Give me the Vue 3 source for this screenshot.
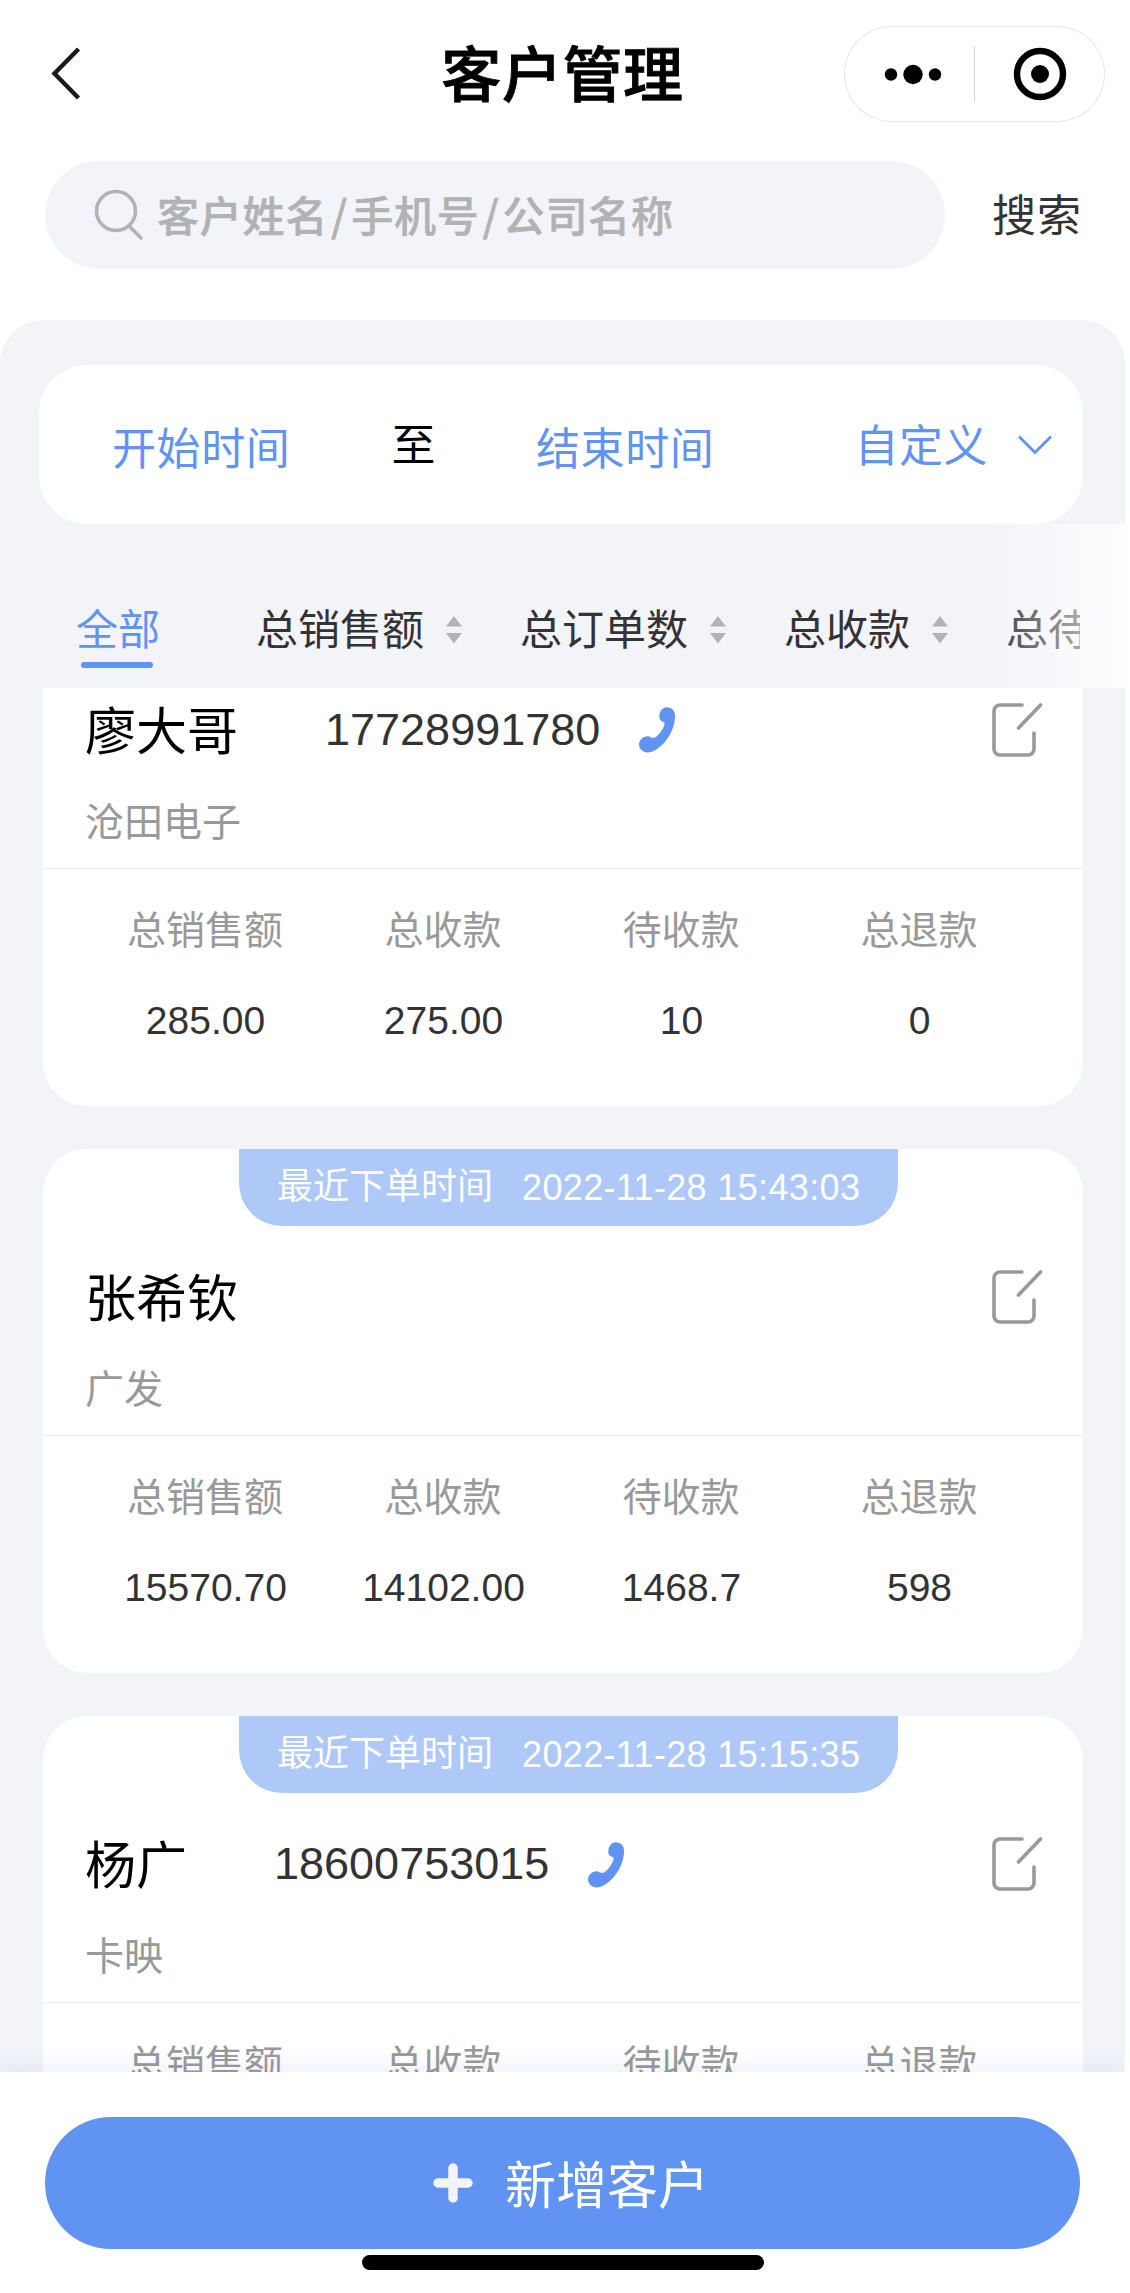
<script setup>
const tabs = [
  { label: '总销售额', sort: true },
  { label: '总订单数', sort: true },
  { label: '总收款', sort: true },
  { label: '总待', sort: false },
]
const labels = ['总销售额', '总收款', '待收款', '总退款']
const customers = [
  { time: '', name: '廖大哥', phone: '17728991780', company: '沧田电子', values: ['285.00', '275.00', '10', '0'] },
  { time: '2022-11-28 15:43:03', name: '张希钦', phone: '', company: '广发', values: ['15570.70', '14102.00', '1468.7', '598'] },
  { time: '2022-11-28 15:15:35', name: '杨广', phone: '18600753015', company: '卡映', values: [] },
]
</script>

<template>
  <div class="page">
    <header class="nav">
      <svg class="back" width="32" height="56" viewBox="0 0 32 56"><path d="M28.500 3 4.500 27.500l24 24.500" fill="none" stroke="#1a1a1a" stroke-width="4.4" /></svg>
      <h1>客户管理</h1>
      <div class="capsule">
        <svg width="261" height="96" viewBox="0 0 261 96">
          <circle cx="47" cy="48.500" r="6.200" /><circle cx="69" cy="48.500" r="9.700" /><circle cx="91" cy="48.500" r="6.200" />
          <path d="M130.500 20v56" stroke="#d5d5d5" stroke-width="1" />
          <circle cx="196" cy="48" r="23" fill="none" stroke="#000" stroke-width="6.400" /><circle cx="196" cy="48" r="9" />
        </svg>
      </div>
    </header>

    <div class="search-row">
      <div class="search">
        <svg width="52" height="52" viewBox="0 0 52 52" fill="none" stroke="#b2b2b2" stroke-width="3.6" stroke-linecap="round"><circle cx="22" cy="22" r="19.500" /><path d="m35 37 12 12" /></svg>
        <span class="placeholder">客户姓名<i>/</i>手机号<i>/</i>公司名称</span>
      </div>
      <span class="search-btn">搜索</span>
    </div>

    <main class="panel">
      <div class="filter">
        <span class="date start">开始时间</span>
        <span class="to">至</span>
        <span class="date end">结束时间</span>
        <span class="custom">自定义</span>
        <svg width="38" height="22" viewBox="0 0 38 22"><path d="m3 2.500 16 16 16-16" fill="none" stroke="#6093f2" stroke-width="2.800" /></svg>
      </div>

      <div class="tabs">
        <div class="tab-scroll">
          <span class="tab active">全部</span>
          <span v-for="t in tabs" :key="t.label" class="tab">{{ t.label }}
            <svg v-if="t.sort" width="16" height="28" viewBox="0 0 16 28" fill="#b3b3b3"><path d="M8 0l8 10.500H0zM8 27.500l8-10.500H0z" /></svg>
          </span>
        </div>
        <div class="fade"></div>
      </div>

      <div class="list">
        <section v-for="c in customers" :key="c.name" class="card" :class="{ scrolled: !c.time }">
          <div v-if="c.time" class="badge"><span>最近下单时间</span><span class="time">{{ c.time }}</span></div>
          <div class="head">
            <span class="name">{{ c.name }}</span>
            <template v-if="c.phone">
              <span class="phone">{{ c.phone }}</span>
              <svg width="36" height="46" viewBox="0 0 36 46"><path fill="#6093f2" d="M27.700.2C32.500.3 36 3.500 36 8.500c0 4.500-.8 9-2.500 13.500C31 28.500 27 34.500 21.500 39.300 17.500 43 12.500 45.600 8.500 45.500 3.800 45.300 0 41.500 0 37.500c0-4.500 4-8.300 8.700-8.300 2.600 0 3.800 1.800 5.600 1.800 2 0 5.500-3.300 7.700-6.500 2-3 3.600-6.300 3.700-8.800-1.500-1.300-5.400-1.500-5.400-6C20.300 4.500 23.500.1 27.700.2z" /></svg>
            </template>
            <svg class="edit" width="52" height="56" viewBox="0 0 52 56" fill="none" stroke="#999" stroke-width="3.600" stroke-linecap="round" stroke-linejoin="round"><path d="M31 3H9a6 6 0 0 0-6 6v38a6 6 0 0 0 6 6h28a6 6 0 0 0 6-6V31M49.500 3 27.500 26" /></svg>
          </div>
          <div class="company">{{ c.company }}</div>
          <div class="stats">
            <div v-for="(l, i) in labels" :key="l" class="stat">
              <span class="label">{{ l }}</span>
              <span v-if="c.values.length" class="value">{{ c.values[i] }}</span>
            </div>
          </div>
        </section>
      </div>
    </main>

    <footer class="footer">
      <button class="add">
        <svg width="40" height="40" viewBox="0 0 40 40"><path d="M20 5v30M5 20h30" stroke="#f2f4f9" stroke-width="9.500" stroke-linecap="round" /></svg>
        <span>新增客户</span>
      </button>
      <div class="home"></div>
    </footer>
  </div>
</template>

<style>
html, body { margin: 0; background: #fff; }
</style>

<style scoped>
* { box-sizing: border-box; }
.page {
  width: 1125px; height: 2293px; overflow: hidden; background: #fff;
  display: flex; flex-direction: column;
  font-family: "Liberation Sans", "Noto Sans CJK SC", sans-serif; color: #333;
}
svg { display: block; flex: none; }
span { white-space: nowrap; }
.nav { height: 161px; flex: none; display: grid; grid-template-columns: 282px 561px 282px; align-items: start; }
.back { margin: 46px 0 0 50px; }
h1 { margin: 27px 0 0; text-align: center; font-family: "Noto Sans CJK SC", sans-serif; font-size: 60px; letter-spacing: .6px; line-height: 88px; font-weight: 500; -webkit-text-stroke: .9px #000; color: #000; }
.capsule { width: 261px; height: 96px; margin: 26px 0 0 1px; border-radius: 48px; box-shadow: inset 0 0 0 1px #e6e6e6; }
.search-row { height: 159px; flex: none; display: flex; align-items: flex-start; padding-left: 45px; }
.search { width: 900px; height: 108px; border-radius: 54px; background: #f2f4f9; display: flex; align-items: center; padding-left: 49px; }
.placeholder { margin: -4px 0 0 11px; font-family: "Noto Sans CJK SC", sans-serif; font-size: 42px; letter-spacing: .8px; font-weight: 500; -webkit-text-stroke: .5px #b2b2b2; color: #b2b2b2; }
.placeholder i { display: inline-block; width: 23px; text-align: center; font-style: normal; }
.search-btn { margin: 2px 0 0 47px; font-size: 44px; letter-spacing: 1px; line-height: 108px; }
.panel { flex: 1; min-height: 0; background: #f2f4f8; border-radius: 44px 44px 0 0; padding-top: 45px; display: flex; flex-direction: column; }
.filter { height: 159px; flex: none; width: 1044px; margin-left: 39px; background: #fff; border-radius: 48px; display: flex; align-items: center; font-size: 44px; letter-spacing: .6px; color: #6093f2; }
.date { margin-left: 73px; padding-top: 3px; }
.to { margin: -5px 0 0 101px; color: #000; }
.end { margin-left: 100px; }
.custom { margin: -4px 0 0 140px; }
.filter svg { margin-left: 28px; }
.tabs { height: 164px; flex: none; position: relative; padding: 0 45px 0 76px; }
.tab-scroll { height: 164px; overflow: hidden; display: flex; }
.tab { flex: none; height: 146px; padding-top: 68px; margin-right: 58px; font-size: 42px; line-height: 62px; display: flex; align-items: center; }
.tab svg { margin: -2px 0 0 22px; }
.active { color: #6093f2; margin-right: 96px; position: relative; }
.active::after { content: ""; position: absolute; left: 5px; bottom: 2px; width: 72px; height: 6px; border-radius: 3px; background: #6093f2; }
.fade { position: absolute; top: 0; right: 0; width: 140px; height: 164px; background: linear-gradient(90deg, rgba(255, 255, 255, 0), rgba(255, 255, 255, .85)); }
.list { flex: 1; min-height: 0; overflow: hidden; padding-left: 43px; }
.card { width: 1040px; height: 524px; margin-bottom: 43px; border-radius: 44px; background: #fff; overflow: hidden; }
.scrolled { height: 417.5px; border-radius: 0 0 44px 44px; padding-top: 6px; }
.badge { width: 659px; height: 77px; margin-left: 196px; border-radius: 0 0 43px 43px; background: #aec8f8; color: #fff; font-size: 36px; line-height: 76px; display: flex; padding-left: 38px; gap: 29px; }
.time { letter-spacing: .35px; padding-top: 1px; }
.head { height: 74px; margin: 36px 40px 0 42px; display: flex; align-items: center; }
.scrolled .head { margin: 0 40px 1px 42px; }
.name { font-size: 51px; color: #000; margin: -7px 86px 0 0; }
.phone { font-size: 45px; margin: -3px 39px 0 1px; }
.head svg { margin-top: -2px; }
.head .edit { margin: -3px 0 0 auto; }
.company { height: 99px; padding-left: 42px; font-size: 39px; line-height: 107px; color: #999; }
.stats { height: 238px; border-top: 1px solid #ebedf0; padding: 32px 45px 0 43px; display: grid; grid-template-columns: repeat(4, 1fr); }
.stat { display: flex; flex-direction: column; align-items: center; font-size: 39px; line-height: 60px; gap: 30px; }
.label { color: #999; }
.value { padding-left: 1px; }
.footer { position: relative; height: 221px; flex: none; background: #fff; box-shadow: 0 -4px 24px rgba(96, 120, 200, .12); padding: 45px 45px 0; }
.add { width: 1035px; height: 132px; border: 0; border-radius: 66px; background: #6093f2; color: #fff; font: inherit; font-size: 51px; display: flex; align-items: center; padding: 0 0 0 388px; gap: 32px; }
.add span { margin-top: -2px; }
.home { width: 402px; height: 15px; margin: 6px 0 0 317px; background: #000; border-radius: 8px; }
</style>
